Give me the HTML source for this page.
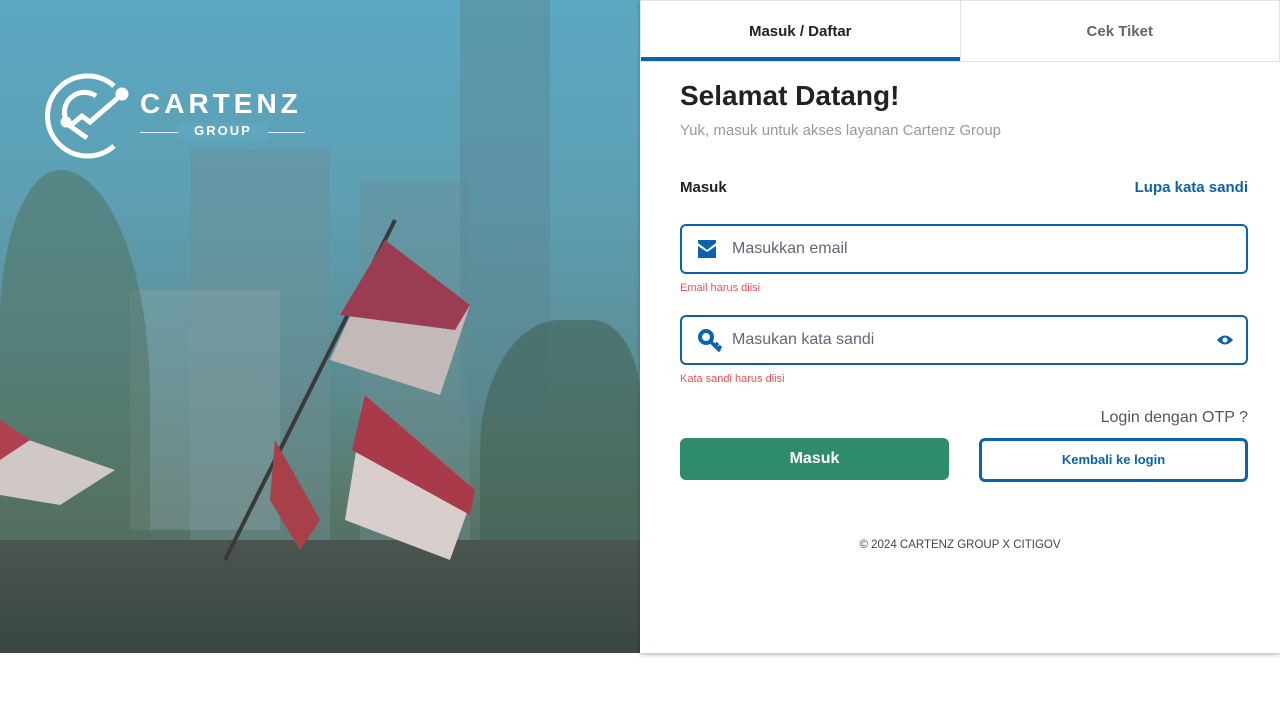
<!DOCTYPE html>
<html><head><meta charset="utf-8"><style>
*{margin:0;padding:0;box-sizing:border-box}
body{width:1280px;height:720px;background:#fff;font-family:"Liberation Sans",sans-serif;position:relative;overflow:hidden}
.left{position:absolute;left:0;top:0;width:640px;height:653px;background:linear-gradient(180deg,#5ba8c2 0%,#5d9fb3 30%,#5b8f96 55%,#5a7a6e 75%,#4a5a52 100%);overflow:hidden}
.panel{position:absolute;left:640px;top:0;width:640px;height:653px;background:#fff;box-shadow:0 2px 4px rgba(0,0,0,.25)}
.tabs{display:flex;height:62px;border:1px solid #e3e3e3}
.tab{flex:1;display:flex;align-items:center;justify-content:center;font-weight:bold;font-size:15px;color:#666}
.tab.a{color:#222;border-bottom:4px solid #0b63ad;padding-top:4px}
.tab+.tab{border-left:1px solid #e3e3e3}
.inp{position:absolute;left:40px;width:568px;height:50px;border:2px solid #0b63ad;border-radius:6px;font-size:16px;color:#667;padding-left:50px;line-height:46px}
.err{position:absolute;left:40px;font-size:11px;color:#f05050}
</style></head><body>
<div class="left">
 <div style="position:absolute;left:190px;top:150px;width:140px;height:420px;background:#6f8e96;opacity:.45"></div>
 <div style="position:absolute;left:360px;top:180px;width:110px;height:400px;background:#6f8e96;opacity:.4"></div>
 <div style="position:absolute;left:460px;top:0;width:90px;height:420px;background:#5a8493;opacity:.45"></div>
 <div style="position:absolute;left:130px;top:290px;width:150px;height:240px;background:#8aa3a6;opacity:.4"></div>
 <div style="position:absolute;left:0;top:170px;width:150px;height:380px;background:#4f6e5a;opacity:.5;border-radius:40% 60% 0 0"></div>
 <div style="position:absolute;left:480px;top:320px;width:160px;height:260px;background:#3f5e50;opacity:.55;border-radius:50% 30% 0 0"></div>
 <div style="position:absolute;left:0;top:540px;width:640px;height:113px;background:linear-gradient(180deg,#4a5550,#3a4644)"></div>
 <svg style="position:absolute;left:0;top:0" width="640" height="653">
  <line x1="225" y1="560" x2="395" y2="220" stroke="#3a3a3a" stroke-width="4"/>
  <path d="M385 240 L470 305 L440 395 L330 360Z" fill="#c2b9b8"/>
  <path d="M385 240 L470 305 L455 330 L340 315Z" fill="#9a3d52"/>
  <path d="M365 395 L475 490 L450 560 L345 520Z" fill="#d8cfcc"/>
  <path d="M365 395 L475 490 L470 515 L352 450Z" fill="#a83a4a"/>
  <path d="M275 440 L320 520 L300 550 L270 500Z" fill="#a8404a"/>
  <path d="M0 430 L115 470 L60 505 L0 495Z" fill="#d0c8c4"/>
  <path d="M0 420 L30 440 L0 460Z" fill="#b04050"/>
 </svg>
 <svg style="position:absolute;left:42px;top:72px" width="90" height="88" fill="none" stroke="#fff" stroke-width="5">
  <path d="M72 14 A40 40 0 1 0 72 74"/>
  <path d="M24 48 A20 20 0 0 1 54 24"/>
  <path d="M45 66 L28 54 L40 44 L48 50 L78 24"/>
  <circle cx="24" cy="50" r="3" fill="#fff"/><circle cx="80" cy="22" r="4" fill="#fff"/>
 </svg>
 <div style="position:absolute;left:140px;top:88px;color:#fff;font-size:28px;font-weight:bold;letter-spacing:4px">CARTENZ</div>
 <div style="position:absolute;left:140px;top:132px;width:165px;height:1px;background:#fff;opacity:.8"></div>
 <div style="position:absolute;left:178px;top:123px;width:90px;background:#5fa6be;text-align:center;color:#fff;font-size:13px;font-weight:bold;letter-spacing:2px">GROUP</div>
</div>
<div class="panel">
 <div class="tabs"><div class="tab a">Masuk / Daftar</div><div class="tab">Cek Tiket</div></div>
 <div style="position:absolute;left:40px;top:80px;font-size:28px;font-weight:bold;color:#222">Selamat Datang!</div>
 <div style="position:absolute;left:40px;top:122px;font-size:15px;color:#999">Yuk, masuk untuk akses layanan Cartenz Group</div>
 <div style="position:absolute;left:40px;top:179px;font-size:15px;font-weight:bold;color:#222">Masuk</div>
 <div style="position:absolute;right:32px;top:179px;font-size:15px;font-weight:bold;color:#0b63ad">Lupa kata sandi</div>
 <div class="inp" style="top:224px">Masukkan email
  <svg style="position:absolute;left:16px;top:14px" width="18" height="18"><path d="M0 0H18V3L9 10L0 3Z M0 6L9 12L18 6V18H0Z" fill="#0b63ad"/></svg></div>
 <div class="err" style="top:282px">Email harus diisi</div>
 <div class="inp" style="top:315px">Masukan kata sandi
  <svg style="position:absolute;left:16px;top:12px" width="26" height="24"><circle cx="8" cy="8" r="6" fill="none" stroke="#0b63ad" stroke-width="4"/><path d="M12 12L22 22M17 17L20 14M20 20L23 17" stroke="#0b63ad" stroke-width="3.5"/></svg>
  <svg style="position:absolute;right:12px;top:17px" width="18" height="12"><path d="M1 6Q9 -3 17 6Q9 15 1 6Z" fill="#0b63ad"/><circle cx="9" cy="6" r="2.5" fill="#fff"/></svg></div>
 <div class="err" style="top:373px">Kata sandi harus diisi</div>
 <div style="position:absolute;right:32px;top:409px;font-size:16px;color:#555">Login dengan OTP ?</div>
 <div style="position:absolute;left:40px;top:438px;width:269px;height:42px;background:#2e8b6c;border-radius:6px;color:#fff;font-weight:bold;font-size:16px;text-align:center;line-height:42px">Masuk</div>
 <div style="position:absolute;left:339px;top:438px;width:269px;height:44px;border:3px solid #0b63ad;border-radius:6px;color:#0b63ad;font-weight:bold;font-size:13px;text-align:center;line-height:38px">Kembali ke login</div>
 <div style="position:absolute;left:0;width:640px;top:539px;text-align:center;font-size:11.5px;color:#444">© 2024 CARTENZ GROUP X CITIGOV</div>
</div>
</body></html>
